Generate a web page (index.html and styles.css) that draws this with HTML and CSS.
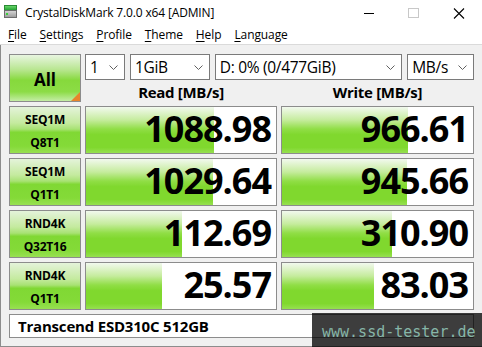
FILE: index.html
```html
<!DOCTYPE html>
<html>
<head>
<meta charset="utf-8">
<link rel="stylesheet" href="styles.css">
</head>
<body>
<div class="window">
  <div class="titlebar">
    <svg class="appicon" width="16" height="16" viewBox="0 0 16 16">
      <defs>
        <linearGradient id="g1" x1="0" y1="0" x2="0" y2="1">
          <stop offset="0" stop-color="#6fdc6f"/>
          <stop offset="1" stop-color="#1e9a2e"/>
        </linearGradient>
        <linearGradient id="g2" x1="0" y1="0" x2="0" y2="1">
          <stop offset="0" stop-color="#d8d8d8"/>
          <stop offset="1" stop-color="#9a9a9a"/>
        </linearGradient>
      </defs>
      <rect x="0.5" y="0.5" width="12" height="5" fill="url(#g1)" stroke="#2a8a34"/>
      <rect x="0.5" y="5.5" width="12" height="7" fill="url(#g2)" stroke="#6c6c6c"/>
      <rect x="2" y="8" width="2" height="2" fill="#3ccf3c"/>
    </svg>
    <span class="title">CrystalDiskMark 7.0.0 x64 [ADMIN]</span>
    <div class="controls">
      <svg class="ctl" width="46" height="26" viewBox="0 0 46 26"><line x1="18" y1="13.5" x2="28" y2="13.5" stroke="#000" stroke-width="1"/></svg>
      <svg class="ctl" width="46" height="26" viewBox="0 0 46 26"><rect x="18.5" y="8.5" width="10" height="9" fill="none" stroke="#c8c8c8"/></svg>
      <svg class="ctl" width="46" height="26" viewBox="0 0 46 26"><path d="M18 8.5 L28 18.5 M28 8.5 L18 18.5" stroke="#000" stroke-width="1.1"/></svg>
    </div>
  </div>
  <div class="menubar">
    <span class="mi"><u>F</u>ile</span>
    <span class="mi"><u>S</u>ettings</span>
    <span class="mi"><u>P</u>rofile</span>
    <span class="mi"><u>T</u>heme</span>
    <span class="mi"><u>H</u>elp</span>
    <span class="mi"><u>L</u>anguage</span>
  </div>
  <div class="client">
    <div class="grid">
      <div class="allbtn">All</div>
      <div class="topright">
        <div class="combos">
          <div class="combo w1"><span>1</span><svg width="9" height="5" viewBox="0 0 9 5"><polyline points="0.5,0.5 4.5,4.5 8.5,0.5" fill="none" stroke="#606060"/></svg></div>
          <div class="combo w2"><span>1GiB</span><svg width="9" height="5" viewBox="0 0 9 5"><polyline points="0.5,0.5 4.5,4.5 8.5,0.5" fill="none" stroke="#606060"/></svg></div>
          <div class="combo w3"><span>D: 0% (0/477GiB)</span><svg width="9" height="5" viewBox="0 0 9 5"><polyline points="0.5,0.5 4.5,4.5 8.5,0.5" fill="none" stroke="#606060"/></svg></div>
          <div class="combo w4"><span>MB/s</span><svg width="9" height="5" viewBox="0 0 9 5"><polyline points="0.5,0.5 4.5,4.5 8.5,0.5" fill="none" stroke="#606060"/></svg></div>
        </div>
        <div class="headers">
          <div class="hdr">Read [MB/s]</div>
          <div class="hdr">Write [MB/s]</div>
        </div>
      </div>

      <div class="label"><span>SEQ1M</span><span>Q8T1</span></div>
      <div class="cell"><div class="bar" style="width:128px"></div><div class="val">1088.98</div></div>
      <div class="cell"><div class="bar" style="width:126px"></div><div class="val">966.61</div></div>

      <div class="label"><span>SEQ1M</span><span>Q1T1</span></div>
      <div class="cell"><div class="bar" style="width:127px"></div><div class="val">1029.64</div></div>
      <div class="cell"><div class="bar" style="width:125px"></div><div class="val">945.66</div></div>

      <div class="label"><span>RND4K</span><span>Q32T16</span></div>
      <div class="cell"><div class="bar" style="width:96px"></div><div class="val">112.69</div></div>
      <div class="cell"><div class="bar" style="width:110px"></div><div class="val">310.90</div></div>

      <div class="label"><span>RND4K</span><span>Q1T1</span></div>
      <div class="cell"><div class="bar" style="width:76px"></div><div class="val">25.57</div></div>
      <div class="cell"><div class="bar" style="width:92px"></div><div class="val">83.03</div></div>

      <div class="name">Transcend ESD310C 512GB</div>
    </div>
  </div>
  <div class="watermark">www.ssd-tester.de</div>
</div>
</body>
</html>
```
FILE: styles.css
```css
* { box-sizing: border-box; }
html, body { margin: 0; padding: 0; }
body {
  width: 482px;
  height: 347px;
  overflow: hidden;
  background: #ffffff;
  font-family: "Open Sans", "Noto Sans", sans-serif;
  color: #000;
}
.window {
  position: relative;
  width: 482px;
  height: 347px;
  display: flex;
  flex-direction: column;
}
.titlebar {
  height: 26px;
  display: flex;
  align-items: center;
  background: #fff;
}
.appicon {
  margin-left: 4px;
  flex: none;
}
.title {
  margin-left: 5px;
  font-size: 12px;
  letter-spacing: -0.15px;
  line-height: 26px;
}
.controls {
  margin-left: auto;
  display: flex;
  height: 26px;
}
.ctl { display: block; }
.controls .ctl:first-child { margin-right: -2px; }
.menubar {
  height: 19px;
  display: flex;
  align-items: center;
  padding-left: 8px;
  gap: 13px;
  border-bottom: 1px solid #dadada;
  font-size: 12px;
  letter-spacing: -0.1px;
  line-height: 18px;
  background: #fff;
}
.mi u { text-decoration: underline; text-underline-offset: 2px; }
.client {
  flex: 1;
  background: #f0f0f0;
  border-left: 1px solid #8c8c8c;
  border-bottom: 1px solid #8c8c8c;
  padding: 9px 0 0 8px;
}
.grid {
  display: grid;
  grid-template-columns: 72px 192px 193px;
  grid-template-rows: 48px 48px 48px 48px 48px 24px;
  column-gap: 4px;
  row-gap: 4px;
}
.allbtn {
  border: 1px solid #8c8c8c;
  background: linear-gradient(#e8f5e0 0%, #b8e690 32%, #86d93c 55%, #8cdc46 80%, #c4eda6 100%);
  position: relative;
  display: flex;
  align-items: center;
  justify-content: center;
  font-weight: 700;
  font-size: 17px;
  padding-top: 2px;
}
.allbtn::after {
  content: "";
  position: absolute;
  right: 0;
  bottom: 0;
  width: 0;
  height: 0;
  border-left: 9px solid transparent;
  border-bottom: 9px solid #e8842c;
}
.topright {
  grid-column: 2 / 4;
  display: flex;
  flex-direction: column;
}
.combos {
  display: flex;
  gap: 5px;
  height: 26px;
}
.combo {
  height: 26px;
  background: #fff;
  border: 1px solid #7a7a7a;
  display: flex;
  align-items: center;
  padding: 0 6px 0 4px;
  font-size: 15.5px;
  letter-spacing: -0.3px;
}
.combo span { flex: 1; white-space: nowrap; }
.combo svg { flex: none; display: block; }
.w1 { width: 40px; }
.w2 { width: 80px; }
.w3 { width: 188px; }
.w4 { width: 67px; }
.headers {
  flex: 1;
  display: grid;
  grid-template-columns: 192px 193px;
  column-gap: 4px;
  align-items: center;
}
.hdr {
  text-align: center;
  font-weight: 700;
  font-size: 15px;
  letter-spacing: -0.3px;
  line-height: 20px;
  padding-top: 1px;
}
.label {
  border: 1px solid #8c8c8c;
  background: linear-gradient(#e4f3da 0%, #c4ea9e 35%, #a8e274 48%, #80d834 55%, #84da38 85%, #98e052 100%);
  display: flex;
  flex-direction: column;
  align-items: center;
  justify-content: center;
  font-weight: 700;
  font-size: 12px;
  line-height: 23px;
  letter-spacing: -0.2px;
  padding-top: 2px;
}
.cell {
  border: 1px solid #8c8c8c;
  background: #fff;
  display: grid;
  grid-template: 1fr / 1fr;
}
.bar {
  grid-area: 1 / 1;
  height: 100%;
  background: linear-gradient(#f2f9ee 0%, #c6ec9e 28%, #90de46 48%, #80d82e 60%, #80d82e 88%, #96e050 100%);
}
.val {
  grid-area: 1 / 1;
  justify-self: end;
  align-self: center;
  font-weight: 700;
  font-size: 36px;
  letter-spacing: -1px;
  line-height: 44px;
  padding-right: 5px;
  margin-top: -2px;
}
.name {
  grid-column: 1 / 4;
  border: 1px solid #8c8c8c;
  background: #fff;
  font-weight: 700;
  font-size: 15px;
  line-height: 22px;
  padding-left: 8px;
  letter-spacing: -0.2px;
}
.watermark {
  position: absolute;
  right: 0;
  bottom: 0;
  width: 170px;
  height: 34px;
  background: rgba(0, 0, 0, 0.76);
  color: #86b6a8;
  font-family: "DejaVu Sans Mono", "Liberation Mono", monospace;
  font-size: 15px;
  line-height: 34px;
  padding-left: 10px;
  padding-top: 2px;
  white-space: nowrap;
}
```
